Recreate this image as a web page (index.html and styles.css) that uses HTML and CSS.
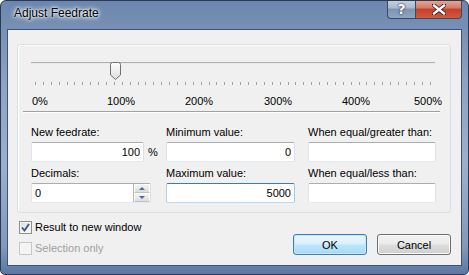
FILE: index.html
```html
<!DOCTYPE html>
<html lang="en">
<head>
  <meta charset="UTF-8">
  <title>Adjust Feedrate</title>
  <link rel="stylesheet" href="styles.css">
</head>
<body>
  <div class="window">
    <!-- caption -->
    <div class="titlebar">
      <span class="title">Adjust Feedrate</span>
      <div class="caption-buttons">
        <span class="cap cap-help">?</span>
        <span class="cap cap-close">
          <svg width="14" height="11" viewBox="0 0 14 11">
            <path d="M1.5 1 L12.5 10 M12.5 1 L1.5 10" stroke="#3a1510" stroke-width="4" stroke-linecap="round"/>
            <path d="M2 1.5 L12 9.5 M12 1.5 L2 9.5" stroke="#fff" stroke-width="2.4" stroke-linecap="square"/>
          </svg>
        </span>
      </div>
    </div>

    <div class="client">
      <div class="group">
        <!-- feedrate slider -->
        <div class="slider">
          <div class="track"></div>
          <svg class="thumb" width="11" height="18" viewBox="0 0 11 18">
            <defs>
              <linearGradient id="thumbFill" x1="0" y1="0" x2="0" y2="1">
                <stop offset="0" stop-color="#ffffff"/>
                <stop offset="1" stop-color="#dcdcdc"/>
              </linearGradient>
            </defs>
            <path d="M0.5 2.5 Q0.5 0.5 2.5 0.5 H8.5 Q10.5 0.5 10.5 2.5 V13 L5.5 17.5 L0.5 13 Z" fill="url(#thumbFill)" stroke="#707070"/>
          </svg>
        </div>
        <div class="ticks"><i></i><i></i><i></i><i></i><i></i><i></i><i></i><i></i><i></i><i></i><i></i><i></i><i></i><i></i><i></i><i></i><i></i><i></i><i></i><i></i><i></i><i></i><i></i><i></i><i></i><i></i><i></i><i></i><i></i><i></i><i></i><i></i><i></i><i></i><i></i><i></i><i></i><i></i><i></i><i></i><i></i><i></i><i></i><i></i><i></i><i></i><i></i><i></i><i></i><i></i><i></i></div>
        <div class="scale">
          <span>0%</span>
          <span>100%</span>
          <span>200%</span>
          <span>300%</span>
          <span>400%</span>
          <span>500%</span>
        </div>
        <div class="separator"></div>

        <!-- values -->
        <div class="fields">
          <div class="field">
            <label>New feedrate:</label>
            <div class="input-row">
              <input class="textbox num w-feed" value="100">
              <span class="unit">%</span>
            </div>
          </div>
          <div class="field">
            <label>Minimum value:</label>
            <input class="textbox num w-mid" value="0">
          </div>
          <div class="field">
            <label>When equal/greater than:</label>
            <input class="textbox w-right" value="">
          </div>
          <div class="field">
            <label>Decimals:</label>
            <div class="spin-box">
              <input class="spin-input" value="0">
              <div class="spinner">
                <span class="spin-btn"><b class="arrow-up"></b></span>
                <span class="spin-btn"><b class="arrow-down"></b></span>
              </div>
            </div>
          </div>
          <div class="field">
            <label>Maximum value:</label>
            <input class="textbox num w-mid focused" value="5000">
          </div>
          <div class="field">
            <label>When equal/less than:</label>
            <input class="textbox w-right" value="">
          </div>
        </div>
      </div>

      <div class="footer">
        <div class="checks">
          <div class="check-row">
            <span class="checkbox checked">
              <svg width="9" height="9" viewBox="0 0 9 9"><path d="M1 4.5 L3.5 7.5 L8 1" fill="none" stroke="#3b5395" stroke-width="1.8"/></svg>
            </span>
            <span>Result to new window</span>
          </div>
          <div class="check-row disabled">
            <span class="checkbox"></span>
            <span>Selection only</span>
          </div>
        </div>
        <div class="buttons">
          <button class="btn btn-default">OK</button>
          <button class="btn">Cancel</button>
        </div>
      </div>
    </div>
  </div>
</body>
</html>
```

FILE: styles.css
```css
/* page */
body {
  margin: 0;
  background: #fff;
  font-family: "Liberation Sans", Arial, sans-serif;
  font-size: 11px;
  color: #000;
}

/* window frame (aero) */
.window {
  width: 469px;
  height: 275px;
  box-sizing: border-box;
  border: 1px solid #2a3a52;
  border-radius: 6px 6px 5px 5px;
  padding: 0 6px 8px 6px;
  display: flex;
  flex-direction: column;
  background: linear-gradient(to bottom, #6c86ad 0%, #8ea3c3 30%, #9cb0cc 60%, #8299bc 90%, #5a77a3 100%);
  overflow: hidden;
}
.titlebar {
  height: 28px;
  display: flex;
  justify-content: space-between;
  align-items: flex-start;
}
.title {
  padding: 5px 0 0 7px;
  font-size: 12px;
  line-height: 15px;
  color: #000;
  text-shadow: 0 0 6px #fff, 0 0 4px #fff, 0 0 2px #fff;
}
.caption-buttons {
  display: flex;
  margin-top: -1px;
}
.cap {
  height: 19px;
  box-sizing: border-box;
  display: flex;
  align-items: center;
  justify-content: center;
  border: 1px solid #3b4a60;
  border-top: 0;
}
.cap-help {
  width: 28px;
  border-right: 0;
  border-radius: 0 0 0 4px;
  background: linear-gradient(to bottom, #c9d3e0 0%, #a9b8cc 45%, #7e93b1 50%, #8fa5c2 100%);
  color: #fff;
  font: bold 14px "DejaVu Sans", sans-serif;
  text-shadow: 0 0 2px #1b2a40, 0 0 1px #1b2a40;
}
.cap-close {
  width: 47px;
  border-radius: 0 0 4px 0;
  background: linear-gradient(to bottom, #e9a99b 0%, #d47a69 45%, #c2402c 50%, #d25a3d 100%);
}

/* client area */
.client {
  flex: 1;
  display: flex;
  flex-direction: column;
  background: #f0f0f0;
  border: 1px solid #3f5473;
}
.group {
  margin: 14px 10px 0 9px;
  padding: 11px 0 9px 0;
  border: 1px solid #d5dfe5;
  border-radius: 3px;
  box-shadow: inset 1px 1px 0 #fff;
}

/* slider */
.slider {
  position: relative;
  height: 18px;
  width: 404px;
  margin-left: 13px;
}
.track {
  margin-top: 6px;
  height: 1px;
  background: #b0b0b0;
  border-bottom: 1px solid #e7eaea;
}
.thumb {
  position: absolute;
  left: 79px;
  top: 0;
}
.ticks {
  display: flex;
  justify-content: space-between;
  width: 396px;
  height: 3px;
  margin: 2px 0 0 17px;
}
.ticks i {
  width: 1px;
  background: #a0a0a0;
}
.scale {
  display: grid;
  grid-template-columns: 75px 78px 79px 78px 72px auto;
  margin: 10px 0 0 14px;
  line-height: 13px;
}
.separator {
  margin: 3px 10px 0 5px;
  height: 1px;
  background: #a0a0a0;
  border-bottom: 1px solid #fff;
}

/* value fields */
.fields {
  display: grid;
  grid-template-columns: 135px 142px 128px;
  row-gap: 5px;
  margin: 13px 0 0 13px;
}
.field {
  display: flex;
  flex-direction: column;
  gap: 3px;
}
.field label {
  line-height: 13px;
}
.input-row {
  display: flex;
  align-items: center;
}
.unit {
  margin-left: 4px;
}
.textbox {
  box-sizing: border-box;
  height: 20px;
  margin: 0;
  padding: 0 3px;
  font: 11px "Liberation Sans", Arial, sans-serif;
  color: #000;
  background: #fff;
  border: 1px solid;
  border-color: #abadb3 #dbdfe6 #e3e9ef #e2e3ea;
  border-radius: 2px;
  outline: none;
}
.textbox.num {
  text-align: right;
}
.textbox.focused {
  border-color: #3d7bad #a4c9e3 #b7d9ed #b5cfe7;
}
.w-feed { width: 113px; }
.w-mid { width: 129px; }
.w-right { width: 128px; }

.spin-box {
  box-sizing: border-box;
  width: 120px;
  height: 20px;
  display: flex;
  background: #fff;
  border: 1px solid;
  border-color: #abadb3 #dbdfe6 #e3e9ef #e2e3ea;
  border-radius: 2px;
}
.spin-input {
  flex: 1;
  min-width: 0;
  border: 0;
  padding: 0 3px;
  margin: 0;
  font: 11px "Liberation Sans", Arial, sans-serif;
  background: transparent;
  outline: none;
}
.spinner {
  width: 16px;
  display: flex;
  flex-direction: column;
  border-left: 1px solid #b5b5b5;
}
.spin-btn {
  flex: 1;
  display: flex;
  align-items: center;
  justify-content: center;
  background: linear-gradient(to bottom, #f5f5f5, #dcdcdc);
  border: 1px solid #fff;
  border-bottom-color: #c2c2c2;
}
.arrow-up,
.arrow-down {
  width: 0;
  height: 0;
  border-left: 3px solid transparent;
  border-right: 3px solid transparent;
}
.arrow-up { border-bottom: 3px solid #4d6aa5; }
.arrow-down { border-top: 3px solid #4d6aa5; }

/* footer */
.footer {
  margin-top: auto;
  padding: 0 10px 10px 11px;
  display: flex;
  justify-content: space-between;
  align-items: flex-end;
}
.checks {
  display: flex;
  flex-direction: column;
  gap: 8px;
}
.check-row {
  display: flex;
  align-items: center;
  gap: 3px;
  line-height: 13px;
}
.checkbox {
  width: 13px;
  height: 13px;
  box-sizing: border-box;
  border: 1px solid #8f8f8f;
  background: linear-gradient(135deg, #dcdcdc, #fbfbfb);
  box-shadow: inset 0 0 0 1px #f4f4f4;
  display: flex;
  align-items: center;
  justify-content: center;
}
.check-row.disabled {
  color: #a0a0a0;
}
.check-row.disabled .checkbox {
  border-color: #c8c8c8;
  background: #f4f4f4;
  box-shadow: none;
}
.buttons {
  display: flex;
  gap: 10px;
}
.btn {
  width: 74px;
  height: 21px;
  padding: 0;
  font: 11px "Liberation Sans", Arial, sans-serif;
  color: #000;
  border: 1px solid #707070;
  border-radius: 3px;
  background: linear-gradient(to bottom, #f2f2f2 0%, #ebebeb 48%, #dddddd 52%, #cfcfcf 100%);
  box-shadow: inset 0 0 0 1px #fbfbfb;
}
.btn-default {
  border-color: #3c7fb1;
  background: linear-gradient(to bottom, #eaf6fd 0%, #d9f0fc 48%, #bee6fd 52%, #a7d9f5 100%);
  box-shadow: inset 0 0 0 1px #c5e6f6, 0 0 0 0 transparent;
}
```
